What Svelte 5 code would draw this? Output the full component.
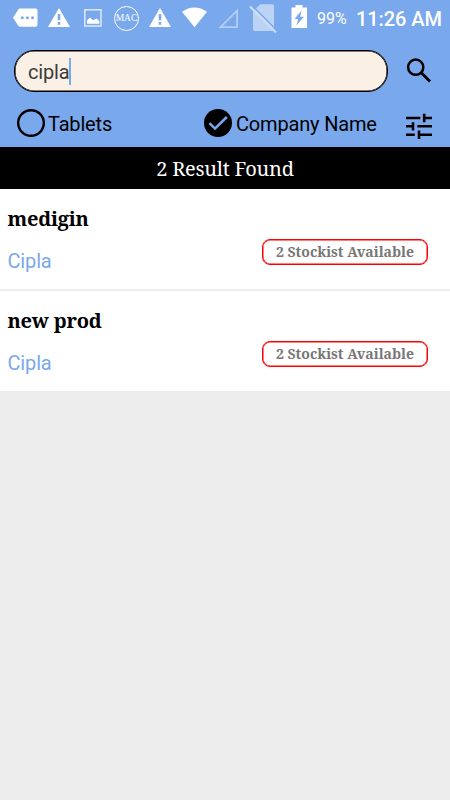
<script>
  const results = [
    { name: 'medigin', company: 'Cipla', stockists: 2 },
    { name: 'new prod', company: 'Cipla', stockists: 2 },
  ];
  let query = $state('cipla');
</script>

{#snippet warning()}
  <svg class="warning" width="22" height="36" viewBox="0 0 22 36">
    <path fill="#fff" fill-rule="evenodd" d="M11 8 22 27H0ZM9.7 14V20.2H12.3V14ZM9.7 22V24.7H12.3V22Z" />
  </svg>
{/snippet}

<main>
  <header>
    <div class="status">
      <svg width="25" height="36" viewBox="13 0 25 36">
        <path fill="#fff" d="M20 8.6H35.5Q37.5 8.6 37.5 10.6V24.8Q37.5 26.8 35.5 26.8H20Q19 26.8 18.3 25.8L13 17.7 18.3 9.6Q19 8.6 20 8.6Z" />
        <g fill="#7aa8ec"><circle cx="22.3" cy="17.8" r="1.5" /><circle cx="27.4" cy="17.8" r="1.5" /><circle cx="32.5" cy="17.8" r="1.5" /></g>
      </svg>
      {@render warning()}
      <svg class="picture" width="18" height="36" viewBox="84 0 18 36">
        <rect x="84.8" y="9.8" width="16.2" height="16.2" fill="none" stroke="#e6effc" stroke-width="1.4" />
        <path fill="#fff" d="M87 23.8V20.5L90 17.6 93 20.2 96.5 18.5 99.3 21V23.8Z" />
      </svg>
      <div class="mac">MAC</div>
      {@render warning()}
      <svg class="wifi" width="26" height="36" viewBox="182 0 26 36">
        <path fill="#fff" d="M182 11.7Q194.5 3.2 207 11.7L194.6 27.2Z" />
      </svg>
      <svg class="signal" width="20" height="36" viewBox="218 0 20 36">
        <path fill="none" stroke="#b4cef5" stroke-width="1.8" d="M220.5 27.1 237.1 10.6V27.1Z" />
      </svg>
      <svg class="sim" width="28" height="36" viewBox="249 0 28 36">
        <path fill="#bdd3f5" d="M253 11.5 260.3 4.2H272Q274 4.2 274 6.2V29Q274 31 272 31H255Q253 31 253 29Z" />
        <path stroke="#7aa8ec" stroke-width="1.3" d="M252.5 6 275.5 29" />
        <path stroke="#cbddf8" stroke-width="2.2" d="M250 6.5 276 32.5" />
      </svg>
      <svg class="battery" width="16" height="36" viewBox="291 0 16 36">
        <path fill="#fff" fill-rule="evenodd" d="M295.5 5H302.5V7.5H307V28H291.5V7.5H295.5ZM301.5 10.5 294.5 19H298.2L296.4 25.5 304 16.7H300.2Z" />
      </svg>
      <span class="percent">99%</span>
      <span class="time">11:26 AM</span>
    </div>

    <div class="search">
      <label class="field"><span>{query}</span><i></i></label>
      <svg width="26" height="26" viewBox="0 0 26 26" fill="none" stroke="#000">
        <circle cx="9.7" cy="9.2" r="7.6" stroke-width="2.5" />
        <path stroke-width="3" d="M15.5 15 24 23.5" />
      </svg>
    </div>

    <div class="filters">
      <div class="option">
        <svg width="28" height="28" viewBox="0 0 28 28"><circle cx="14" cy="14" r="12.8" fill="none" stroke="#000" stroke-width="2.4" /></svg>
        <span>Tablets</span>
      </div>
      <div class="option company">
        <svg width="28" height="28" viewBox="0 0 28 28"><circle cx="14" cy="14" r="14" /><path d="M5.4 14.2 11 19.6 22.8 8" fill="none" stroke="#7aa8ec" stroke-width="2.5" /></svg>
        <span>Company Name</span>
      </div>
      <svg class="tune" width="26" height="26" viewBox="0 0 26 26">
        <path fill="none" stroke="#000" stroke-width="2.6" d="M0 5H14.3M18.2 5H26M18.2 .8V9.3M0 13.3H8.3M7 9.3V17.6M11.3 13.3H26M0 21.7H8.8M13 21.7H26M13 17.6V26" />
      </svg>
    </div>
  </header>

  <div class="count"><span>{results.length} Result Found</span></div>

  <div class="list">
    {#each results as item}
      <article>
        <div class="info">
          <h2>{item.name}</h2>
          <p>{item.company}</p>
        </div>
        <div class="badge"><span>{item.stockists} Stockist Available</span></div>
      </article>
    {/each}
  </div>
</main>

<style>
  main { width: 450px; height: 800px; overflow: hidden; background: #ededed; font-family: Roboto, sans-serif; color: #000; }
  svg { display: block; flex: none; }
  header { height: 147px; background: #7aa8ec; }
  .status { display: flex; align-items: center; height: 36px; padding-left: 13px; color: #fff; white-space: nowrap; }
  .warning { margin-left: 10px; }
  .picture { margin-left: 14px; }
  .mac { box-sizing: border-box; flex: none; width: 25px; height: 25px; margin: 1px 0 0 12px; border: 1px solid #fff; border-radius: 50%; font: 9.5px/23px "Liberation Serif", serif; display: flex; justify-content: center; }
  .mac + .warning { margin-left: 10px; }
  .wifi { margin-left: 11px; }
  .signal { margin-left: 10px; }
  .sim { margin-left: 11px; }
  .battery { margin-left: 14px; }
  .percent { width: 32px; margin-left: 10px; font-size: 16px; line-height: 36px; padding-top: 1px; }
  .time { margin-left: 7px; font-size: 20px; font-weight: 500; line-height: 36px; letter-spacing: -0.07px; padding-top: 1px; }
  .search { display: flex; align-items: center; padding: 14px 18px 0 14px; height: 42px; }
  .field { box-sizing: border-box; display: flex; align-items: center; width: 374px; height: 42px; padding-left: 13px; border: 1px solid #000; box-shadow: inset 0 0 0 .6px #000; border-radius: 20px; background: #faf0e6; font-size: 20px; letter-spacing: -0.15px; color: #3a3a3a; }
  .field span { padding-top: 1px; }
  .field i { width: 2px; height: 27px; margin-left: -1px; background: #7aa8ec; }
  .search svg { margin-left: 18px; }
  .filters { display: flex; align-items: center; height: 28px; padding: 17px 0 0 17px; font-size: 20px; letter-spacing: -0.17px; }
  .option { display: flex; align-items: center; width: 187px; gap: 3px; }
  .option span { padding-top: 1px; white-space: nowrap; }
  .company { width: 202px; gap: 4px; }
  .tune { margin-top: 6px; }
  .count { display: flex; align-items: center; justify-content: center; height: 42px; background: #000; color: #fff; font: 20px "Noto Serif", serif; letter-spacing: -0.23px; }
  .list { display: flex; flex-direction: column; gap: 2px; }
  article { display: flex; justify-content: space-between; height: 100px; padding: 0 22px 0 7.5px; background: #fff; }
  h2 { margin: 17px 0 0; font: bold 20px/26px "Noto Serif", serif; letter-spacing: -0.22px; }
  p { margin: 17px 0 0; font-size: 20px; line-height: 24px; letter-spacing: -0.15px; color: #7aa8ec; }
  .badge { box-sizing: border-box; display: flex; align-items: center; justify-content: center; width: 166px; height: 26px; margin-top: 50px; padding-bottom: 2px; border: 1px solid #f00; box-shadow: inset 0 0 0 .5px #f00; border-radius: 8px; color: #777; font: bold 14px "Noto Serif", serif; white-space: nowrap; }
</style>
